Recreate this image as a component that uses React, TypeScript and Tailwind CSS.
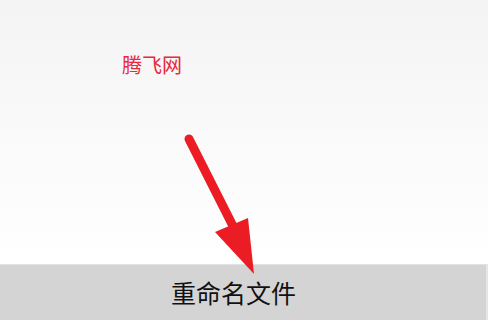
export default function App() {
  return (
    <div
      className="relative w-[488px] h-[320px] overflow-hidden flex flex-col"
      style={{ fontFamily: '"Noto Sans CJK SC", "Noto Sans", sans-serif' }}
    >
      <div className="flex-1 bg-gradient-to-b from-[#f4f4f4] to-[#ffffff] pl-[122px] pt-[54px]">
        <span className="text-[20px] leading-none text-[#e8283c]">腾飞网</span>
      </div>
      <div className="h-[56px] bg-[#d4d4d4] border-t border-[#e2e2e2] border-r-2 border-r-[#e6e6e6] flex items-center pl-[171px]">
        <span className="text-[25px] leading-none text-[#111111]">重命名文件</span>
      </div>
      <svg
        className="absolute left-0 top-0 pointer-events-none"
        width="488"
        height="320"
        viewBox="0 0 488 320"
      >
        <line x1="189" y1="139" x2="236" y2="232" stroke="#ec1c24" strokeWidth="9" strokeLinecap="round" />
        <polygon points="215,232 248,218 254,274" fill="#ec1c24" />
      </svg>
    </div>
  );
}
